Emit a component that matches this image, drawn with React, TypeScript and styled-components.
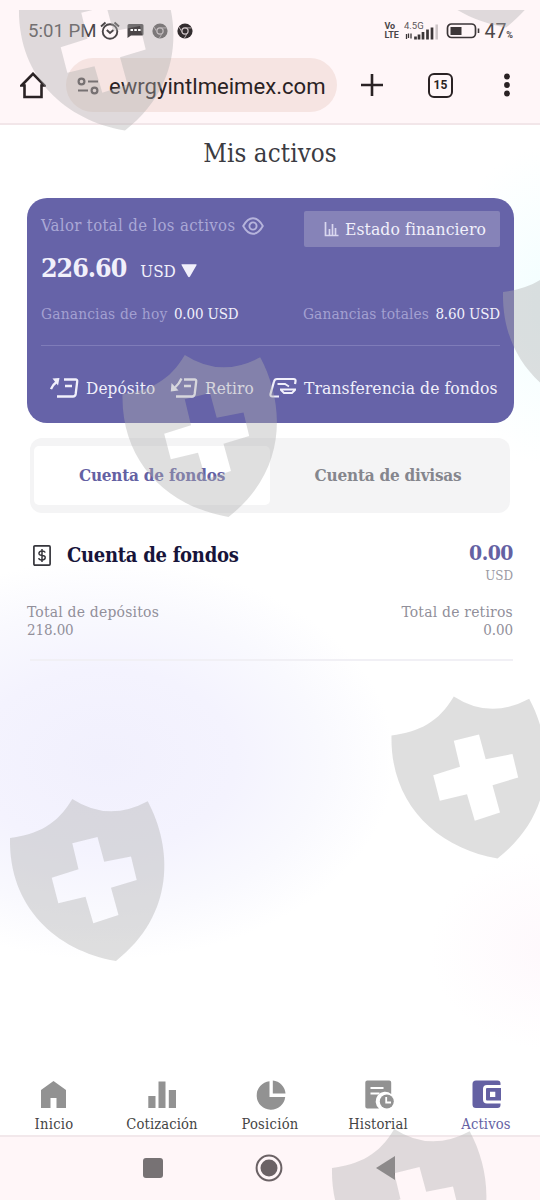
import React from 'react';
import styled, { createGlobalStyle } from 'styled-components';

const serif = '"DejaVu Serif Condensed", "DejaVu Serif", serif';

const GlobalStyle = createGlobalStyle`
  body { margin: 0; background: #fff; }
  * { box-sizing: border-box; }
  svg { display: block; flex: none; }
`;

const Phone = styled.div`
  position: relative;
  display: flex;
  flex-direction: column;
  width: 540px;
  height: 1200px;
  overflow: hidden;
  background: #fff;
`;

const Text = styled.span<{ $size: number; $color: string; $bold?: boolean; $line?: number; $track?: number }>`
  font-family: ${serif};
  font-stretch: condensed;
  font-size: ${(p) => p.$size}px;
  font-weight: ${(p) => (p.$bold ? 700 : 400)};
  line-height: ${(p) => (p.$line ? `${p.$line}px` : 'normal')};
  letter-spacing: ${(p) => p.$track ?? 0}px;
  color: ${(p) => p.$color};
  white-space: nowrap;
`;

const Chrome = styled.header`
  height: 125px;
  background: #fff6f8;
  border-bottom: 2px solid #f2e6e9;
  font-family: Roboto, sans-serif;
`;

const StatusBar = styled.div`
  display: flex;
  align-items: center;
  height: 58px;
  padding: 4px 27px 0 28px;
  color: #4b4648;
`;

const Clock = styled.span`
  width: 72px;
  font-size: 18.6px;
  white-space: nowrap;
`;

const StatusIcons = styled.div`
  display: flex;
  align-items: center;
  gap: 7px;
`;

const Network = styled.div`
  display: flex;
  align-items: center;
  margin-left: auto;
`;

const Volte = styled.div`
  display: flex;
  flex-direction: column;
  width: 20px;
  font-size: 9px;
  font-weight: 700;
  line-height: 9px;
`;

const Percent = styled.span`
  margin-left: 3px;
  font-size: 19.5px;
  small { font-size: 9px; font-weight: 700; }
`;

const BrowserBar = styled.div`
  display: flex;
  align-items: center;
  height: 54px;
  padding: 0 20px;
`;

const Address = styled.div`
  display: flex;
  align-items: center;
  width: 271px;
  height: 54px;
  margin-left: 20px;
  padding: 1px 0 0 11px;
  gap: 10px;
  border-radius: 27px;
  background: #f6e4e2;
  color: #2a2224;
  font-size: 22.1px;
  white-space: nowrap;
`;

const TabCount = styled.div`
  display: grid;
  place-items: center;
  width: 25px;
  height: 25px;
  margin-left: 44px;
  border: 2.5px solid #2a2224;
  border-radius: 6px;
  color: #2a2224;
  font-size: 12px;
  font-weight: 700;
`;

const PlusIcon = styled.svg`
  margin-left: 23px;
`;

const MoreIcon = styled.svg`
  margin-left: 50px;
`;

const Page = styled.main`
  display: flex;
  flex: 1;
  flex-direction: column;
  background:
    radial-gradient(ellipse 290px 200px at 105px 635px, #f1f0fd 0%, #f4f3fe 45%, #f9f9fe 75%, rgba(255, 255, 255, 0) 100%),
    radial-gradient(ellipse 120px 100px at 550px 825px, #fef8fc 0%, rgba(255, 255, 255, 0) 100%),
    radial-gradient(ellipse 110px 160px at 550px 180px, #f2feff 0%, rgba(255, 255, 255, 0) 100%),
    #fff;
`;

const Title = styled.h1`
  height: 58px;
  margin: 0;
  text-align: center;
  font-weight: 400;
  line-height: 53px;
`;

const Card = styled.section`
  width: 487px;
  height: 225px;
  margin: 15px 0 0 27px;
  padding: 13px 14px 0;
  border-radius: 20px;
  background: #6663a8;
`;

const CardTop = styled.div`
  display: flex;
  justify-content: space-between;
  height: 36px;
`;

const AssetLabel = styled.div`
  display: flex;
  align-items: center;
  height: 29px;
  gap: 7px;
`;

const Statement = styled.button`
  display: flex;
  align-items: center;
  width: 196px;
  height: 36px;
  padding: 0 0 0 20px;
  gap: 5px;
  border: 0;
  border-radius: 2px;
  background: #8683b8;
`;

const Amount = styled.div`
  display: flex;
  height: 41px;
`;

const Currency = styled.div`
  display: flex;
  align-items: center;
  gap: 5px;
  margin-left: 14px;
  padding-top: 7px;
`;

const Earnings = styled.div`
  display: flex;
  align-items: center;
  justify-content: space-between;
  height: 52px;
`;

const Pair = styled.div`
  display: flex;
  align-items: baseline;
  gap: 6.5px;
`;

const CardRule = styled.div`
  height: 1px;
  margin-top: 5px;
  background: #7f7cb9;
`;

const Actions = styled.div`
  display: grid;
  grid-template-columns: 120px 99px auto;
  align-items: center;
  height: 76px;
  padding: 8px 0 0 9px;
`;

const Action = styled.div`
  display: flex;
  align-items: center;
  gap: 7px;
`;

const Segments = styled.div`
  display: grid;
  grid-template-columns: 1fr 1fr;
  width: 480px;
  height: 75px;
  margin: 15px 0 0 30px;
  padding: 8px 4px;
  border-radius: 12px;
  background: #f4f4f5;
`;

const Segment = styled.div<{ $active?: boolean }>`
  display: flex;
  align-items: center;
  justify-content: center;
  padding-bottom: 2px;
  border-radius: 5px;
  background: ${(p) => (p.$active ? '#fff' : 'transparent')};
`;

const Account = styled.section`
  display: flex;
  justify-content: space-between;
  height: 56px;
  margin: 17px 27px 0 33px;
`;

const AccountName = styled.div`
  display: flex;
  align-items: center;
  height: 50px;
  gap: 16px;
`;

const Stack = styled.div<{ $end?: boolean }>`
  display: flex;
  flex-direction: column;
  align-items: ${(p) => (p.$end ? 'flex-end' : 'flex-start')};
`;

const Balance = styled(Stack)`
  padding-top: 11px;
`;

const Totals = styled.div`
  display: flex;
  justify-content: space-between;
  margin: 18px 27px 0;
`;

const Rule = styled.div`
  height: 2px;
  margin: 20px 27px 0 30px;
  background: #f1f0f5;
`;

const TabBar = styled.nav`
  display: grid;
  grid-template-columns: repeat(5, 108px);
  height: 59px;
  margin-top: auto;
  padding-top: 4px;
`;

const NavItem = styled.div`
  display: flex;
  flex-direction: column;
  align-items: center;
`;

const SystemBar = styled.footer`
  display: grid;
  grid-template-columns: 37px 80px 37px;
  column-gap: 58px;
  justify-content: center;
  align-items: center;
  justify-items: center;
  height: 65px;
  padding: 0 2px 2px 0;
  border-top: 2px solid #f2e8eb;
  background: #fff6f8;
`;

const Watermark = styled.svg`
  position: absolute;
  inset: 0;
  pointer-events: none;
`;

const SHIELD =
  'M.5 40.500C28 37 48 27 62.800 1.500Q99 25 138.200 3.800C163 50 166 117 106.500 163.500C46 153 -1 109 .5 40.500Z' +
  'M62.800 45.800L88 39.500L94.700 64.200L121.500 59L127.200 82.500L101.500 90.200L109 117.500L83.800 125.800L76 99.200L48.800 105.800L42.200 80.200L69 71.800Z';

const SHIELD_SPOTS = [
  [18.5, -33], [399.5, -136], [122, 353.5], [502.500, 251.500], [391, 695], [9.500, 797.500], [331.500, 1127.5],
];

const ChromeLogo = ({ color }: { color: string }) => (
  <svg width="18" height="16" viewBox="0 0 18 16" fill="none">
    <circle cx="9" cy="8" r="7.600" fill={color} />
    <circle cx="9" cy="8" r="3.100" stroke="#d8cdd0" strokeWidth="1.200" />
    <path d="M9 4.900H15.800M6.300 9.500L3 4M11.700 9.500L8.300 15.300" stroke="#b8aeb1" strokeWidth="1" />
  </svg>
);

const light = '#f1f0fb';

const navItems = [
  {
    label: 'Inicio', track: 0.3,
    icon: <path d="M14.500 1L27 10V28H17.500V18H11.500V28H2V10Z" />,
  },
  {
    label: 'Cotización', track: 0.12,
    icon: <path d="M1.300 16H8.500V28H1.300ZM11.500 1.500H18.500V28H11.500ZM21.800 10H29V28H21.800Z" />,
  },
  {
    label: 'Posición', track: 0.28,
    icon: (
      <>
        <path d="M14.500 1.200V17H30.200A14.300 14.300 0 1 1 14.500 1.200Z" />
        <path d="M17.800 .5A14 14 0 0 1 30.500 13.500H17.800Z" />
      </>
    ),
  },
  {
    label: 'Historial', track: 0.17,
    icon: (
      <>
        <path d="M4.300 .5H26.200a2 2 0 0 1 2 2V14A8.500 8.500 0 0 0 16 28.500H4.300a2 2 0 0 1-2-2V2.500a2 2 0 0 1 2-2Z" />
        <path d="M7.500 8H20.500M7.500 13.500H16.500" stroke="#fff" strokeWidth="2" />
        <circle cx="23.800" cy="21.500" r="7" />
        <path d="M23.200 17V22.500H28" fill="none" stroke="#fff" strokeWidth="1.800" />
      </>
    ),
  },
  {
    label: 'Activos', track: 0.15, active: true,
    icon: (
      <>
        <path d="M5 .5H26.500a3 3 0 0 1 3 3V5H16a4 4 0 0 0-4 4V19.500a4 4 0 0 0 4 4H29.500V25a3 3 0 0 1-3 3H5a3.500 3.500 0 0 1-3.500-3.500V4A3.500 3.500 0 0 1 5 .5Z" />
        <path fillRule="evenodd" d="M16 8H30V20.500H16a1 1 0 0 1-1-1V9a1 1 0 0 1 1-1ZM19 11.700V17H24.300V11.700Z" />
      </>
    ),
  },
];

export default function App() {
  return (
    <Phone>
      <GlobalStyle />
      <Chrome>
        <StatusBar>
          <Clock>5:01 PM</Clock>
          <StatusIcons>
            <svg width="20" height="20" viewBox="0 0 20 20" fill="none" stroke="#4b4648" strokeWidth="1.900">
              <circle cx="10" cy="10.500" r="7.300" />
              <path d="M1 5.500L5.500 1.500M19 5.500L14.500 1.500M6.800 9L10 12L13.500 9" />
            </svg>
            <svg width="17" height="16" viewBox="0 0 17 16">
              <path d="M2 1H15a1.500 1.500 0 0 1 1.500 1.500V11a1.500 1.500 0 0 1-1.500 1.500H4L.5 15V2.500A1.500 1.500 0 0 1 2 1Z" fill="#4b4648" />
              <path d="M3.500 7H6M7.300 7H9.800M11.100 7H13.600" stroke="#fff" strokeWidth="2" />
            </svg>
            <ChromeLogo color="#5a5456" />
            <ChromeLogo color="#332d2f" />
          </StatusIcons>
          <Network>
            <Volte><span>Vo</span><span>LTE</span></Volte>
            <svg width="37" height="20" viewBox="0 0 37 20">
              <text x="0" y="8" fontSize="9.500" fill="#5c5658" fontFamily="Roboto">4.5G</text>
              <path d="M2.500 13V18M4.500 12.500V17M7 12.500V17.500" stroke="#3c3638" strokeWidth="1.300" />
              <path d="M11.500 15.500V18.500M15 13.500V18.500M19 11V18.500M23.500 8.500V18.500M28 6.500V18.500" stroke="#3c3638" strokeWidth="2.700" />
              <path d="M32.700 3.500V18.500" stroke="#cdc5c7" strokeWidth="2.500" />
            </svg>
            <svg width="36" height="16" viewBox="0 0 36 16">
              <rect x="6.500" y="1" width="28" height="13.500" rx="4" fill="none" stroke="#3c3638" strokeWidth="1.700" />
              <rect x="9.500" y="4" width="11" height="8" fill="#3c3638" />
            </svg>
            <svg width="4" height="6" viewBox="0 0 4 6"><path d="M1.500 .5V5" stroke="#3c3638" strokeWidth="1.600" /></svg>
            <Percent>47<small>%</small></Percent>
          </Network>
        </StatusBar>
        <BrowserBar>
          <svg width="26" height="27" viewBox="0 0 26 27" fill="none" stroke="#2a2224" strokeWidth="2.600">
            <path d="M1.500 13.500L13 1.800L24.500 13.500H21.500V25H4.500V13.500Z" />
          </svg>
          <Address>
            <svg width="22" height="18" viewBox="0 0 22 18" fill="none" stroke="#51484a" strokeWidth="2.200">
              <circle cx="4.500" cy="4.500" r="2.900" />
              <circle cx="17.500" cy="13.500" r="2.900" />
              <path d="M11 4.500H21M1 13.500H11" />
            </svg>
            ewrgyintlmeimex.com
          </Address>
          <PlusIcon width="24" height="24" viewBox="0 0 24 24" stroke="#2a2224" strokeWidth="2.600">
            <path d="M12 1V23M1 12H23" />
          </PlusIcon>
          <TabCount>15</TabCount>
          <MoreIcon width="8" height="24" viewBox="0 0 8 24" fill="#2a2224">
            <circle cx="4" cy="3.500" r="2.900" /><circle cx="4" cy="12" r="2.900" /><circle cx="4" cy="20.500" r="2.900" />
          </MoreIcon>
        </BrowserBar>
      </Chrome>

      <Page>
        <Title><Text $size={25.7} $line={53} $track={0.1} $color="#3b3b42">Mis activos</Text></Title>
        <Card>
          <CardTop>
            <AssetLabel>
              <Text $size={16.6} $track={0.34} $color="#aaa8d6">Valor total de los activos</Text>
              <svg width="22" height="18" viewBox="0 0 22 18" fill="none" stroke="#b6b4dc" strokeWidth="1.900">
                <path d="M1.200 9Q5.500 1.200 11 1.200T20.800 9Q16.500 16.800 11 16.800T1.200 9Z" />
                <circle cx="11" cy="9" r="3.600" />
              </svg>
            </AssetLabel>
            <Statement>
              <svg width="16" height="15" viewBox="0 0 16 15" fill="none" stroke="#d9d7ef" strokeWidth="1.700">
                <path d="M1.500 0V13.500H14.500M5.500 13V7M8.500 13V2M11.500 13V6" />
              </svg>
              <Text $size={17.4} $track={0.08} $color={light}>Estado financiero</Text>
            </Statement>
          </CardTop>
          <Amount>
            <Text $size={26.5} $line={41} $bold $track={-1} $color={light}>226.60</Text>
            <Currency>
              <Text $size={17} $color={light}>USD</Text>
              <svg width="16" height="14" viewBox="0 0 16 14"><path d="M.5 1Q0 .3 1 .3H15Q16 .3 15.500 1.300L9 12.500Q8 14 7 12.500Z" fill={light} /></svg>
            </Currency>
          </Amount>
          <Earnings>
            <Pair>
              <Text $size={15.4} $track={0.16} $color="#a3a0d1">Ganancias de hoy</Text>
              <Text $size={15} $track={-0.15} $color={light}>0.00 USD</Text>
            </Pair>
            <Pair>
              <Text $size={15.4} $track={0.07} $color="#a3a0d1">Ganancias totales</Text>
              <Text $size={15} $track={-0.15} $color={light}>8.60 USD</Text>
            </Pair>
          </Earnings>
          <CardRule />
          <Actions>
            <Action>
              <svg width="29" height="22" viewBox="0 0 29 22" fill="none" stroke={light} strokeWidth="2.300">
                <path d="M1 12Q2.500 8 7 4.500" />
                <path d="M2.500 1.500L9.500 1L8 8.500Z" fill={light} stroke="none" />
                <path d="M14 2.500H25.500Q27.500 2.500 27.200 4.500L25.700 17Q25.300 19.500 23 19.500H7M15 9H22" />
              </svg>
              <Text $size={17} $track={0.12} $color={light}>Depósito</Text>
            </Action>
            <Action>
              <svg width="28" height="22" viewBox="0 0 28 22" fill="none" stroke={light} strokeWidth="2.300">
                <path d="M11.500 1.500Q9 7 5 10.500" />
                <path d="M1.500 6L.8 14.500L8.500 13.500Z" fill={light} stroke="none" />
                <path d="M14 2.500H24.500Q26.500 2.500 26.200 4.500L24.700 17Q24.300 19.500 22 19.500H6M14 9H21" />
              </svg>
              <Text $size={17} $track={0.12} $color={light}>Retiro</Text>
            </Action>
            <Action>
              <svg width="28" height="22" viewBox="0 0 28 22" fill="none" stroke={light} strokeWidth="2.200">
                <path d="M10 19.500H3.500Q1 19.500 1.500 17L5 4.500Q5.600 2 8 2H24.500Q27 2 26.500 4.500L26 7" />
                <path d="M8.500 7H16L20 9.500M11 12.500H27M12 13L15 16H23L26 13" strokeWidth="1.800" />
              </svg>
              <Text $size={17.4} $track={0.06} $color={light}>Transferencia de fondos</Text>
            </Action>
          </Actions>
        </Card>

        <Segments>
          <Segment $active><Text $size={17} $bold $track={-0.22} $color="#6461a3">Cuenta de fondos</Text></Segment>
          <Segment><Text $size={17} $bold $track={-0.22} $color="#85868d">Cuenta de divisas</Text></Segment>
        </Segments>

        <Account>
          <AccountName>
            <svg width="18" height="21" viewBox="0 0 18 21" fill="none" stroke="#36363c" strokeWidth="1.700">
              <rect x=".9" y=".9" width="16.200" height="19.200" rx="1" />
              <path d="M12.300 7.500Q11.500 6 9 6T6 8T9 10.400T12.200 12.800T9 15T5.700 13.200M9 4V17" strokeWidth="1.500" />
            </svg>
            <Text $size={20} $bold $track={-0.28} $color="#17143a">Cuenta de fondos</Text>
          </AccountName>
          <Balance $end>
            <Text $size={21} $line={24} $bold $track={-0.5} $color="#6461a3">0.00</Text>
            <Text $size={13.3} $line={21} $color="#9b9aa3">USD</Text>
          </Balance>
        </Account>
        <Totals>
          <Stack>
            <Text $size={15.5} $line={17.5} $track={0.22} $color="#918f9a">Total de depósitos</Text>
            <Text $size={15} $line={17.5} $track={-0.1} $color="#918f9a">218.00</Text>
          </Stack>
          <Stack $end>
            <Text $size={15.5} $line={17.5} $track={0.22} $color="#918f9a">Total de retiros</Text>
            <Text $size={15} $line={17.5} $track={-0.1} $color="#918f9a">0.00</Text>
          </Stack>
        </Totals>
        <Rule />

        <TabBar>
          {navItems.map((item) => (
            <NavItem key={item.label}>
              <svg width="30" height="30" viewBox="0 0 30 30" overflow="visible" fill={item.active ? '#6461a3' : '#929292'}>{item.icon}</svg>
              <Text $size={14.6} $line={27} $track={item.track} $color={item.active ? '#6461a3' : '#444'}>{item.label}</Text>
            </NavItem>
          ))}
        </TabBar>
      </Page>

      <SystemBar>
        <svg width="20" height="20" viewBox="0 0 20 20"><rect width="20" height="20" rx="3" fill="#777274" /></svg>
        <svg width="28" height="28" viewBox="0 0 28 28">
          <circle cx="14" cy="14" r="12.400" fill="none" stroke="#6b6265" strokeWidth="2" />
          <circle cx="14" cy="14" r="8.500" fill="#6b6265" />
        </svg>
        <svg width="20" height="24" viewBox="0 0 20 24"><path d="M19 0V24L0 12Z" fill="#777274" /></svg>
      </SystemBar>

      <Watermark width="540" height="1200" viewBox="0 0 540 1200">
        <clipPath id="below-edge"><rect y="10" width="540" height="1190" /></clipPath>
        <g clipPath="url(#below-edge)" fill="rgb(175 175 175 / 0.4)" fillRule="evenodd">
          {SHIELD_SPOTS.map(([x, y]) => (
            <path key={`${x}-${y}`} d={SHIELD} transform={`translate(${x} ${y})`} />
          ))}
        </g>
      </Watermark>
    </Phone>
  );
}
